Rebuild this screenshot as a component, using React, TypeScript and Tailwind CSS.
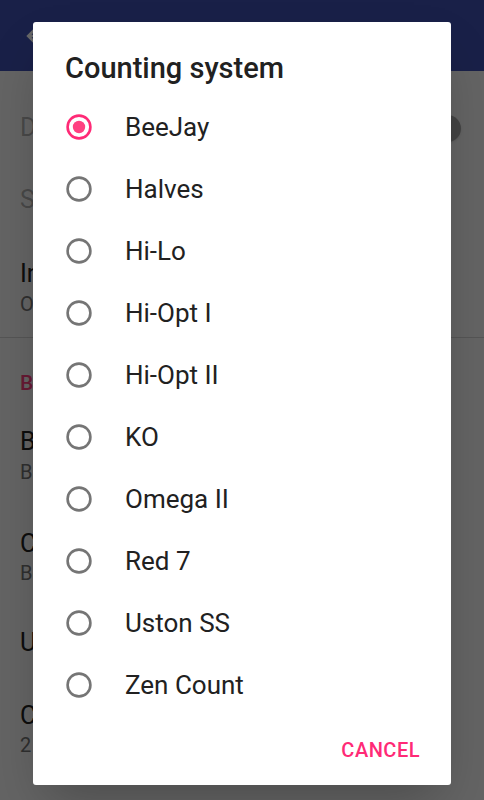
import { useState } from "react";

const systems = [
  "BeeJay",
  "Halves",
  "Hi-Lo",
  "Hi-Opt I",
  "Hi-Opt II",
  "KO",
  "Omega II",
  "Red 7",
  "Uston SS",
  "Zen Count",
];

const Radio = ({ checked }: { checked: boolean }) => (
  <svg width="26" height="26" viewBox="0 0 26 26" className="shrink-0">
    <circle
      cx="13"
      cy="13"
      r="11.4"
      fill="none"
      stroke={checked ? "#ff2a76" : "#757575"}
      strokeWidth="2.6"
    />
    {checked && <circle cx="13" cy="13" r="6.2" fill="#ff4081" />}
  </svg>
);

const SettingsPage = () => (
  <div className="flex flex-col">
    <div className="h-[71px] bg-[#3f51b5] flex items-center pl-[21px]">
      <svg width="32" height="32" viewBox="0 0 24 24" fill="#ffffff">
        <path d="M20 11H7.83l5.59-5.59L12 4l-8 8 8 8 1.41-1.41L7.83 13H20v-2z" />
      </svg>
      <span className="ml-[40px] text-white text-[25px] font-medium">Settings</span>
    </div>

    <div className="pt-[21px] pl-[20px] pr-[24px]">
      <div className="h-[72px] flex items-center justify-between">
        <span className="text-[25px] text-black/30">Dark</span>
        <div className="w-[27px] h-[27px] rounded-full bg-[#a8a8a8] shadow mr-[-1px]" />
      </div>
      <div className="h-[72px] flex items-center">
        <span className="text-[25px] text-black/30">Sound</span>
      </div>
      <div className="h-[101px] pt-[22px] flex flex-col">
        <span className="text-[25px] leading-[31px] text-[#212121]">Insurance</span>
        <span className="text-[20px] leading-[31px] text-[#757575]">Off</span>
      </div>
    </div>
    <div className="h-px bg-black/15" />

    <div className="pl-[20px] pr-[24px]">
      <div className="pt-[33px] text-[21px] leading-[24px] font-medium text-[#ff4081]">
        Blackjack
      </div>
      <div className="pt-[32px] flex flex-col">
        <span className="text-[25px] leading-[30px] text-[#212121]">Bet size</span>
        <span className="text-[20px] leading-[30px] text-[#757575]">Basic</span>
      </div>
      <div className="pt-[42px] flex flex-col">
        <span className="text-[25px] leading-[30px] text-[#212121]">Counting</span>
        <span className="text-[20px] leading-[29px] text-[#757575]">BeeJay</span>
      </div>
      <div className="pt-[40px] flex flex-col">
        <span className="text-[25px] leading-[30px] text-[#212121]">Usage</span>
      </div>
      <div className="pt-[43px] flex flex-col">
        <span className="text-[25px] leading-[30px] text-[#212121]">Card decks</span>
        <span className="text-[20px] leading-[29px] text-[#757575]">2</span>
      </div>
    </div>
  </div>
);

export default function App() {
  const [selected, setSelected] = useState("BeeJay");

  return (
    <div className="relative w-[484px] h-[800px] overflow-hidden bg-[#fafafa] font-['Roboto',sans-serif]">
      <SettingsPage />
      <div className="absolute inset-0 bg-black/60" />

      <div className="absolute left-[33px] top-[22px] w-[418px] h-[763px] bg-white rounded-[3px] shadow-2xl flex flex-col">
        <h2 className="pt-[29px] pl-[32px] text-[29px] leading-[34px] font-medium text-[#212121]">
          Counting system
        </h2>

        <div className="mt-[11px] flex flex-col">
          {systems.map((name) => (
            <button
              key={name}
              onClick={() => setSelected(name)}
              className="h-[62px] flex items-center pl-[66px] -ml-[33px] gap-[33px] text-left"
            >
              <Radio checked={selected === name} />
              <span className="text-[26px] leading-[30px] text-[#212121]">{name}</span>
            </button>
          ))}
        </div>

        <div className="mt-[22px] flex justify-end pr-[31px]">
          <button className="text-[20px] leading-[24px] font-medium tracking-[0.5px] text-[#ff2a76]">
            CANCEL
          </button>
        </div>
      </div>
    </div>
  );
}
